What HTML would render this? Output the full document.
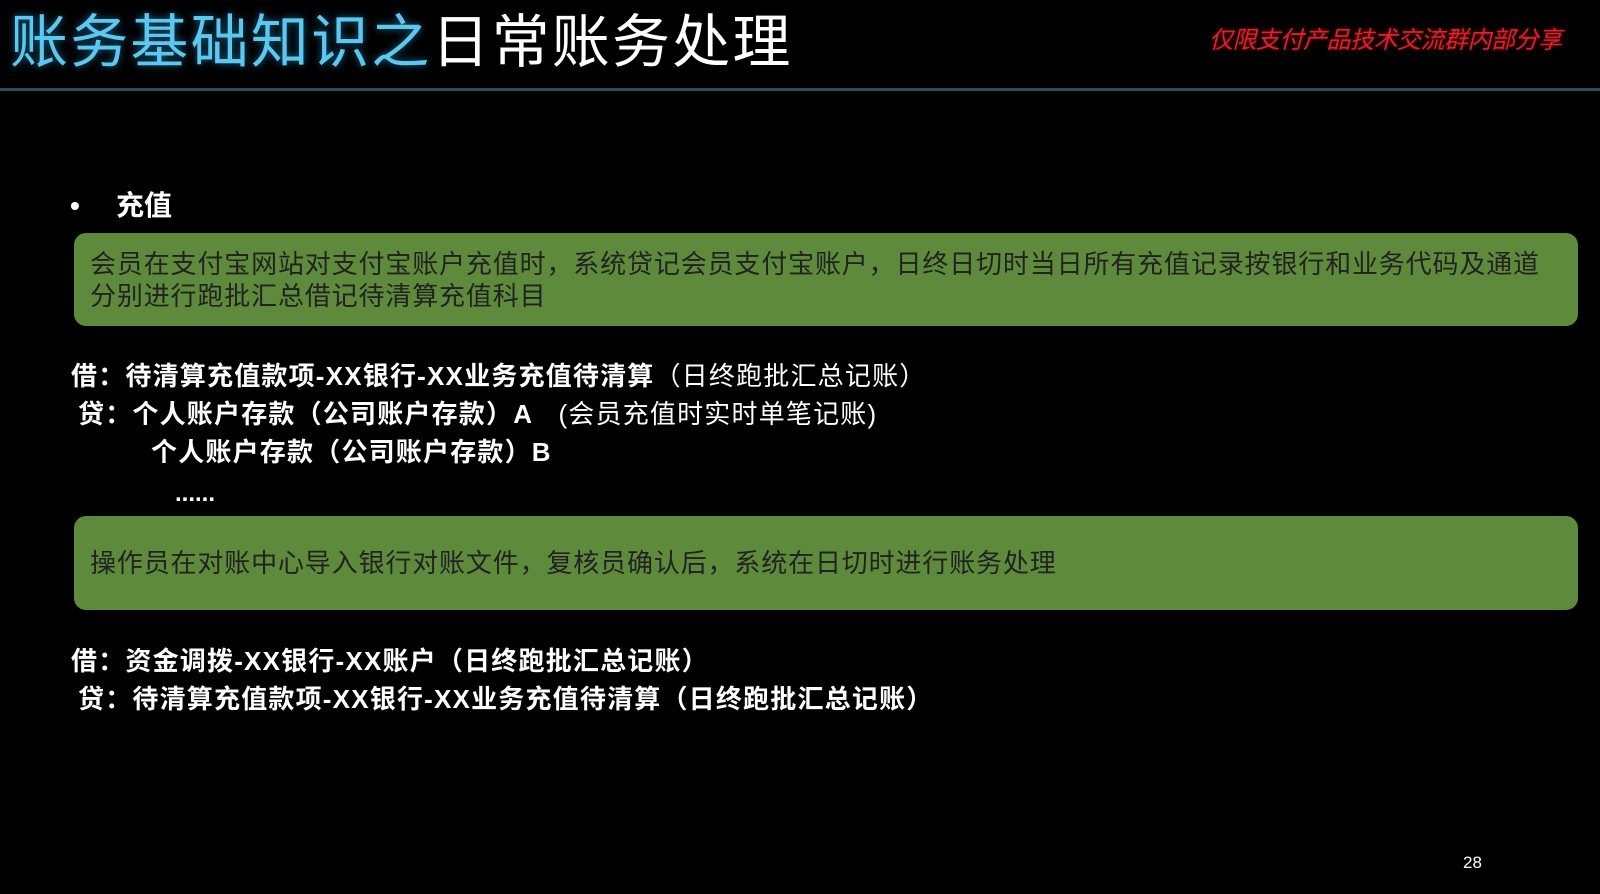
<!DOCTYPE html>
<html><head><meta charset="utf-8"><style>
*{margin:0;padding:0}
body{width:1600px;height:894px;background:#000;position:relative;overflow:hidden;font-family:"Liberation Sans","Noto Sans CJK SC",sans-serif;color:#fff}
.a{position:absolute;white-space:nowrap;line-height:1}
.title{left:10px;top:14px;font-size:58px;letter-spacing:2.2px}
.title .b{color:#5cc8f0;text-shadow:0 0 8px #1a6a90}
.line{position:absolute;left:0;top:88px;width:1600px;height:3px;background:#2c4a5a}
.red{left:1209px;top:29px;font-size:24px;color:#e02030;font-style:italic;letter-spacing:-0.5px;text-shadow:0 0 4px #800}
.box{position:absolute;left:74px;width:1504px;background:#5e8a3b;border-radius:12px}
.bt{font-size:26px;color:#222;letter-spacing:0.85px}
.t{font-size:26px;font-weight:bold;letter-spacing:1.2px}
.n{font-weight:normal}
</style></head><body>
<div class="a title"><span class="b">账务基础知识之</span>日常账务处理</div>
<div class="line"></div>
<div class="a red">仅限支付产品技术交流群内部分享</div>
<div class="a" style="left:70px;top:192px;font-size:28px;font-weight:bold">•</div>
<div class="a" style="left:116px;top:192px;font-size:28px;font-weight:bold">充值</div>
<div class="box" style="top:233px;height:93px"></div>
<div class="a bt" style="left:90px;top:251px">会员在支付宝网站对支付宝账户充值时，系统贷记会员支付宝账户，日终日切时当日所有充值记录按银行和业务代码及通道</div>
<div class="a bt" style="left:90px;top:283px">分别进行跑批汇总借记待清算充值科目</div>
<div class="a t" style="left:71px;top:363px">借：待清算充值款项-XX银行-XX业务充值待清算<span class="n">（日终跑批汇总记账）</span></div>
<div class="a t" style="left:78px;top:401px">贷：个人账户存款（公司账户存款）A&nbsp;&nbsp;&nbsp;<span class="n">(会员充值时实时单笔记账)</span></div>
<div class="a t" style="left:151px;top:439px">个人账户存款（公司账户存款）B</div>
<div class="a t" style="left:175px;top:482px;font-size:24px;letter-spacing:0">......</div>
<div class="box" style="top:516px;height:94px"></div>
<div class="a bt" style="left:90px;top:550px">操作员在对账中心导入银行对账文件，复核员确认后，系统在日切时进行账务处理</div>
<div class="a t" style="left:71px;top:648px">借：资金调拨-XX银行-XX账户（日终跑批汇总记账）</div>
<div class="a t" style="left:78px;top:686px">贷：待清算充值款项-XX银行-XX业务充值待清算（日终跑批汇总记账）</div>
<div class="a" style="left:1463px;top:854px;font-size:17px">28</div>
</body></html>
